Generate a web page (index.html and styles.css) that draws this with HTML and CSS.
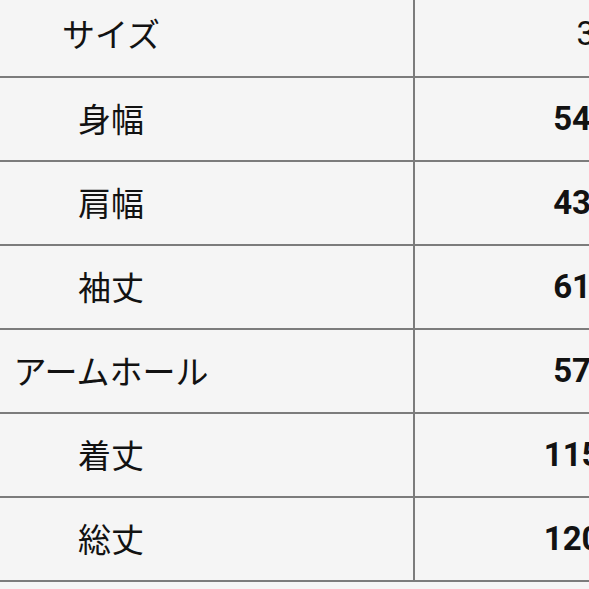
FILE: index.html
```html
<!DOCTYPE html>
<html lang="ja">
<head>
<meta charset="utf-8">
<link rel="stylesheet" href="styles.css">
</head>
<body>
<div class="sheet">
  <div class="row head">
    <div class="label">サイズ</div>
    <div class="value">36</div>
  </div>
  <div class="row">
    <div class="label">身幅</div>
    <div class="value">54cm</div>
  </div>
  <div class="row">
    <div class="label">肩幅</div>
    <div class="value">43cm</div>
  </div>
  <div class="row">
    <div class="label">袖丈</div>
    <div class="value">61cm</div>
  </div>
  <div class="row">
    <div class="label">アームホール</div>
    <div class="value">57cm</div>
  </div>
  <div class="row">
    <div class="label">着丈</div>
    <div class="value">115cm</div>
  </div>
  <div class="row">
    <div class="label">総丈</div>
    <div class="value">120cm</div>
  </div>
</div>
</body>
</html>
```

FILE: styles.css
```css
html, body {
  margin: 0;
  padding: 0;
  background: #f5f5f5;
  overflow: hidden;
  width: 589px;
  height: 589px;
}
.sheet {
  display: flex;
  flex-direction: column;
  width: 775px;
  font-family: Roboto, "Noto Sans CJK JP", sans-serif;
  font-size: 33px;
  color: #121212;
}
.row {
  display: grid;
  grid-template-columns: 415px 360px;
  height: 84px;
  border-bottom: 2px solid #7c7c7c;
  box-sizing: border-box;
}
.row.head {
  height: 78px;
}
.label {
  border-right: 2px solid #7c7c7c;
  padding-right: 191px;
  padding-bottom: 2px;
  display: flex;
  align-items: center;
  justify-content: center;
  white-space: nowrap;
}
.value {
  display: flex;
  align-items: center;
  justify-content: center;
  font-weight: 700;
  padding-bottom: 2px;
  white-space: nowrap;
}
.head .label,
.head .value {
  font-weight: 400;
  padding-bottom: 10px;
}
```
